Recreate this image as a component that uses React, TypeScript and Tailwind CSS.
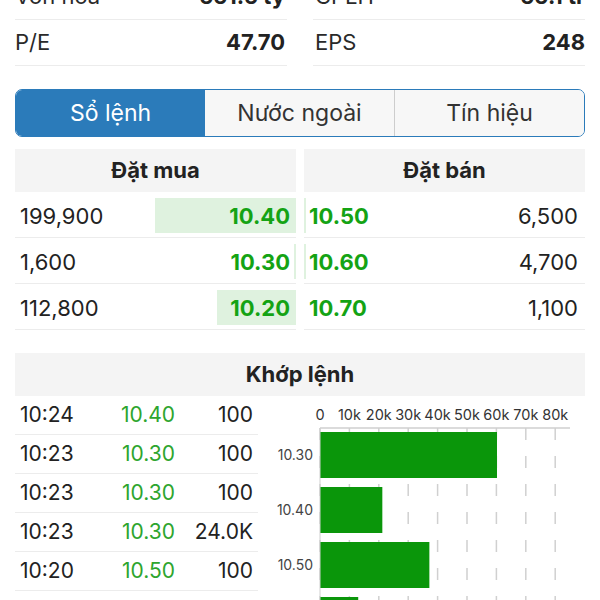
import React from 'react';

const font = { fontFamily: 'Inter, "Noto Sans", sans-serif' };

const infoRows = [
  [{ label: 'Vốn hóa', value: '551.5 tỷ' }, { label: 'CPLH', value: '55.1 tr' }],
  [{ label: 'P/E', value: '47.70' }, { label: 'EPS', value: '248' }],
];

const bids = [
  { vol: '199,900', price: '10.40', bar: 141 },
  { vol: '1,600', price: '10.30', bar: 2 },
  { vol: '112,800', price: '10.20', bar: 79 },
];

const asks = [
  { price: '10.50', vol: '6,500', bar: 2 },
  { price: '10.60', vol: '4,700', bar: 2 },
  { price: '10.70', vol: '1,100', bar: 0 },
];

const trades = [
  { t: '10:24', p: '10.40', v: '100' },
  { t: '10:23', p: '10.30', v: '100' },
  { t: '10:23', p: '10.30', v: '100' },
  { t: '10:23', p: '10.30', v: '24.0K' },
  { t: '10:20', p: '10.50', v: '100' },
];

const chartBars = [
  { label: '10.30', value: 60200 },
  { label: '10.40', value: 21200 },
  { label: '10.50', value: 37200 },
  { label: '10.60', value: 13000 },
];

const X0 = 50;
const PER_10K = 29.4;

const VolumeChart: React.FC = () => {
  const ticks = [0, 1, 2, 3, 4, 5, 6, 7, 8];
  return (
    <svg width={315} height={210} className="block">
      {ticks.map((i) => (
        <text key={`l${i}`} x={X0 + i * PER_10K} y={24} fontSize={14.5} fill="#333" textAnchor="middle" style={font}>
          {i === 0 ? '0' : `${i * 10}k`}
        </text>
      ))}
      {ticks.map((i) => (
        <line key={`g${i}`} x1={X0 + i * PER_10K} x2={X0 + i * PER_10K} y1={32} y2={210} stroke="#d0d0d0" strokeWidth={1.5} strokeDasharray="12 16" />
      ))}
      <line x1={X0} x2={300} y1={32} y2={32} stroke="#cfcfcf" strokeWidth={1.5} />
      {chartBars.map((b, i) => (
        <g key={b.label}>
          <rect x={X0} y={36 + i * 55} width={(b.value / 10000) * PER_10K} height={46} fill="#0a960a" />
          <text x={43} y={36 + i * 55 + 28} fontSize={14} fill="#444" textAnchor="end" style={font}>
            {b.label}
          </text>
        </g>
      ))}
      <line x1={X0} x2={X0} y1={32} y2={210} stroke="#cfcfcf" strokeWidth={1} />
    </svg>
  );
};

export default function App() {
  return (
    <div className="w-[600px] h-[600px] overflow-hidden bg-white text-[#222]" style={font}>
      <div className="px-[15px] mt-[-26px]">
        {infoRows.map((row, r) => (
          <div key={r} className="grid grid-cols-2 gap-[26px]">
            {row.map((c, i) => (
              <div key={c.label} className={`flex justify-between items-center h-[46px] border-b border-[#ececec] text-[22px] ${i === 1 ? 'pl-[2px]' : 'pr-[2px]'}`}>
                <span className="text-[#2a2a2a]">{c.label}</span>
                <span className="font-bold">{c.value}</span>
              </div>
            ))}
          </div>
        ))}

        <div className="mt-[23px] flex h-[48px] rounded-[7px] border-[1.5px] border-[#2b7bba] overflow-hidden text-[23px]">
          <div className="flex-1 flex items-center justify-center bg-[#2b7bba] text-white">Sổ lệnh</div>
          <div className="flex-1 flex items-center justify-center bg-[#f7f7f7] text-[#333] border-r border-[#cdcdcd]">Nước ngoài</div>
          <div className="flex-1 flex items-center justify-center bg-[#f7f7f7] text-[#333]">Tín hiệu</div>
        </div>

        <div className="mt-[12px] grid grid-cols-[281px_281px] gap-[8px]">
          <div>
            <div className="h-[43px] bg-[#f4f4f4] flex items-center justify-center font-bold text-[22px]">Đặt mua</div>
            {bids.map((b) => (
              <div key={b.price} className="h-[46px] pt-[3px] border-b border-[#ececec] flex items-center justify-between text-[22px] relative">
                <span className="pl-[5px]">{b.vol}</span>
                <div className="absolute right-0 top-[6px] bottom-[4px] bg-[#dff2df]" style={{ width: b.bar }} />
                <span className="relative pr-[6px] font-bold text-[#14a314]">{b.price}</span>
              </div>
            ))}
          </div>
          <div>
            <div className="h-[43px] bg-[#f4f4f4] flex items-center justify-center font-bold text-[22px]">Đặt bán</div>
            {asks.map((a) => (
              <div key={a.price} className="h-[46px] pt-[3px] border-b border-[#ececec] flex items-center justify-between text-[22px] relative">
                <div className="absolute left-0 top-[6px] bottom-[4px] bg-[#dff2df]" style={{ width: a.bar }} />
                <span className="relative pl-[5px] font-bold text-[#14a314]">{a.price}</span>
                <span className="pr-[7px]">{a.vol}</span>
              </div>
            ))}
          </div>
        </div>

        <div className="mt-[23px] h-[43px] bg-[#f4f4f4] flex items-center justify-center font-bold text-[22px]">Khớp lệnh</div>
        <div className="flex">
          <div className="w-[243px]">
            {trades.map((t, i) => (
              <div key={i} className="h-[39px] border-b border-[#ececec] flex items-center text-[21px]">
                <span className="w-[100px] pl-[5px]">{t.t}</span>
                <span className="w-[60px] text-right text-[#2ea52e]">{t.p}</span>
                <span className="flex-1 text-right pr-[5px]">{t.v}</span>
              </div>
            ))}
          </div>
          <div className="ml-[12px]">
            <VolumeChart />
          </div>
        </div>
      </div>
    </div>
  );
}
